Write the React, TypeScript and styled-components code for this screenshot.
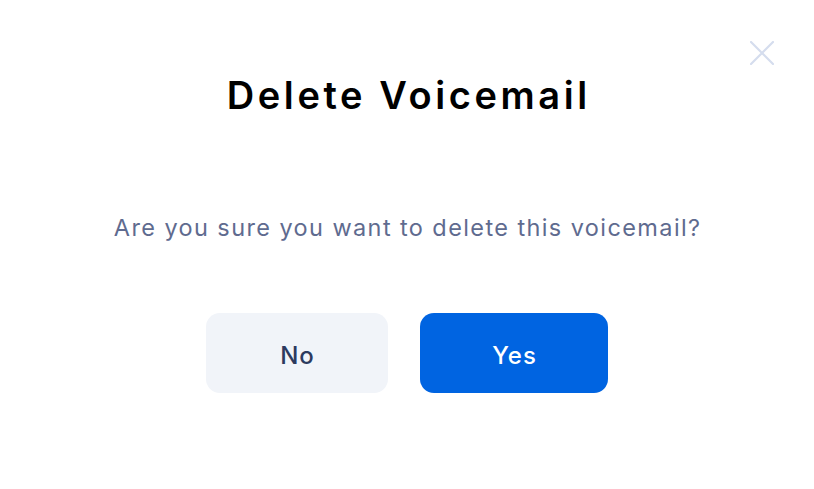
import React from "react";
import styled, { createGlobalStyle } from "styled-components";

const Global = createGlobalStyle`
  html, body { margin: 0; padding: 0; background: #ffffff; }
  body { font-family: Inter, "Noto Sans", sans-serif; -webkit-font-smoothing: antialiased; }
`;

const Dialog = styled.div`
  position: relative;
  width: 814px;
  height: 489px;
  box-sizing: border-box;
  padding-top: 73px;
  display: flex;
  flex-direction: column;
  align-items: center;
  background: #ffffff;
`;

const CloseButton = styled.button`
  position: absolute;
  top: 41px;
  right: 40px;
  width: 24px;
  height: 24px;
  padding: 0;
  border: none;
  background: transparent;
  cursor: pointer;
  display: flex;
  align-items: center;
  justify-content: center;
`;

const Title = styled.h1`
  margin: 0;
  font-family: Inter, sans-serif;
  font-size: 38px;
  line-height: 44px;
  font-weight: 600;
  color: #000000;
  letter-spacing: 3.6px;
  padding-left: 3.6px;
`;

const Message = styled.p`
  margin: 96px 0 0;
  font-family: Inter, sans-serif;
  font-size: 23.5px;
  line-height: 30px;
  font-weight: 400;
  color: #5f6b8f;
  letter-spacing: 1.4px;
  padding-left: 1.4px;
`;

const Actions = styled.div`
  margin-top: 70px;
  display: flex;
  gap: 32px;
`;

const ActionButton = styled.button<{ $primary?: boolean; $width: number }>`
  width: ${(p) => p.$width}px;
  height: 80px;
  border: none;
  border-radius: 14px;
  padding: 4px 0 0 1px;
  font-family: Inter, sans-serif;
  font-size: 24px;
  font-weight: 500;
  letter-spacing: 1px;
  display: flex;
  align-items: center;
  justify-content: center;
  cursor: pointer;
  background: ${(p) => (p.$primary ? "#0064e1" : "#f1f4f9")};
  color: ${(p) => (p.$primary ? "#ffffff" : "#2c3a5f")};
`;

export default function App() {
  return (
    <>
      <Global />
      <Dialog>
        <CloseButton aria-label="Close">
          <svg width="24" height="24" viewBox="0 0 24 24" fill="none">
            <path d="M1 1L23 23M23 1L1 23" stroke="#d5ddee" strokeWidth="2.2" strokeLinecap="round" />
          </svg>
        </CloseButton>
        <Title>Delete Voicemail</Title>
        <Message>Are you sure you want to delete this voicemail?</Message>
        <Actions>
          <ActionButton $width={182}>No</ActionButton>
          <ActionButton $width={188} $primary>Yes</ActionButton>
        </Actions>
      </Dialog>
    </>
  );
}
